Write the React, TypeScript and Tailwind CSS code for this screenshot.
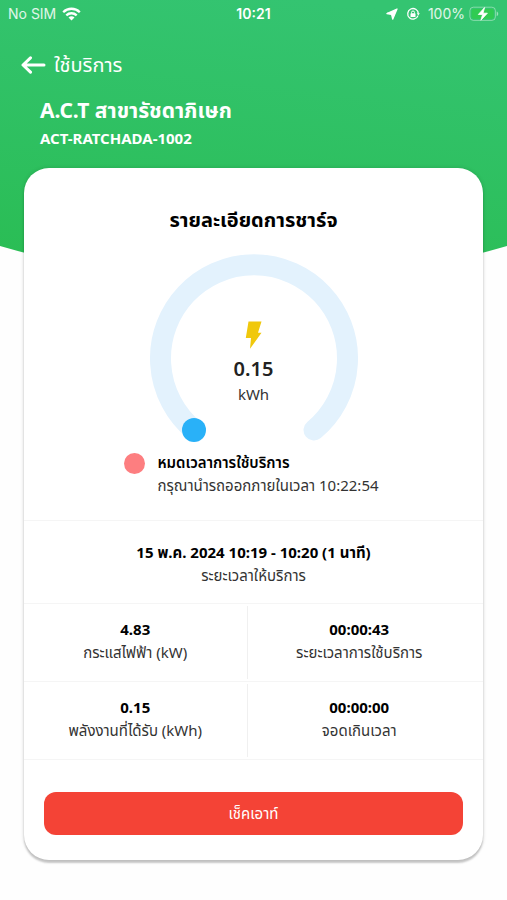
import type { ReactNode } from "react";

type StatProps = {
  value: string;
  label: string;
  className?: string;
};

const stats = [
  [
    { value: "4.83", label: "กระแสไฟฟ้า (kW)" },
    { value: "00:00:43", label: "ระยะเวลาการใช้บริการ" },
  ],
  [
    { value: "0.15", label: "พลังงานที่ได้รับ (kWh)" },
    { value: "00:00:00", label: "จอดเกินเวลา" },
  ],
];

const WifiIcon = () => (
  <svg width="19" height="14" viewBox="0 0 19 14" aria-hidden="true">
    <g fill="none" stroke="white" strokeWidth="2.3">
      <path d="M1.2 5.2C5.900 .6 13.100 .6 17.800 5.200" />
      <path d="M4.300 8.400C7.300 5.500 11.700 5.500 14.700 8.400" />
    </g>
    <path d="M9.500 13.400 6.500 10.400C8.200 8.900 10.800 8.900 12.500 10.400Z" fill="white" />
  </svg>
);

const LocationIcon = () => (
  <svg width="12" height="12" viewBox="0 0 12 12" aria-hidden="true">
    <path
      d="M11 1 6.700 11.200 5.600 6.400.9 5.500Z"
      fill="white"
      stroke="white"
      strokeWidth="1.300"
      strokeLinejoin="round"
    />
  </svg>
);

const RotationLockIcon = () => (
  <svg width="14" height="14" viewBox="0 0 14 14" aria-hidden="true">
    <g fill="none" stroke="white">
      <path d="M12 8.600A5.300 5.300 0 1 1 12.300 6.600" strokeWidth="1.300" />
      <path d="M5.500 6.500V5.500a1.500 1.500 0 0 1 3 0v1" strokeWidth="1" />
    </g>
    <rect x="4.500" y="6.300" width="5" height="3.700" rx=".6" fill="white" />
    <path d="M10.800 6.300h3l-1.500 2.200Z" fill="white" />
  </svg>
);

const BatteryIcon = () => (
  <svg width="30" height="16" viewBox="0 0 30 16" aria-hidden="true">
    <rect x=".9" y="1.200" width="25.500" height="13.200" rx="3.500" fill="none" stroke="white" strokeOpacity=".4" />
    <rect x="2.600" y="2.900" width="22.100" height="9.800" rx="2" fill="#30cb52" />
    <path d="M27.700 5.500c2 .7 2 4 0 4.700Z" fill="white" fillOpacity=".5" />
    <path
      d="M15.600 1.500 9.300 8.500h4.300L11.900 14.200 18.400 7.200h-4.400Z"
      fill="white"
      stroke="white"
      strokeWidth=".8"
      strokeLinejoin="round"
    />
  </svg>
);

const BackIcon = () => (
  <svg width="25" height="18" viewBox="0 0 25 18" aria-hidden="true">
    <path
      d="M23 9H2.500M9.500 1.800 2 9l7.500 7.200"
      fill="none"
      stroke="white"
      strokeWidth="3"
      strokeLinecap="round"
      strokeLinejoin="round"
    />
  </svg>
);

const BoltIcon = () => (
  <svg width="18" height="28" viewBox="0 0 18 28" aria-hidden="true">
    <path d="M3.500.5H16.500L13 11.800H16.500L5 27.800 6 17H.8Z" fill="#f0c80c" />
  </svg>
);

const StatusBar = () => (
  <div className="grid h-7 grid-cols-3 items-center px-2 font-['Inter',sans-serif] text-sm text-white">
    <div className="flex items-center gap-1.5 text-white/85">
      <span>No SIM</span>
      <WifiIcon />
    </div>
    <span className="text-center font-semibold">10:21</span>
    <div className="flex items-center justify-end gap-1">
      <LocationIcon />
      <span className="ml-1">
        <RotationLockIcon />
      </span>
      <span className="ml-1 text-white/85">100%</span>
      <BatteryIcon />
    </div>
  </div>
);

/**
 * Three quarter ring with the energy reading in the middle.
 */
const Gauge = ({ children }: { children: ReactNode }) => (
  <div className="grid justify-items-center">
    <svg
      className="col-start-1 row-start-1"
      width="208"
      height="189"
      viewBox="0 0 208 189"
      aria-hidden="true"
    >
      <path
        d="M44 176A93.500 93.500 0 1 1 164 176"
        fill="none"
        stroke="#e3f2fd"
        strokeWidth="21"
        strokeLinecap="round"
      />
      <circle cx="44" cy="176" r="12" fill="#29b1f8" />
    </svg>
    <div className="col-start-1 row-start-1 flex flex-col items-center pt-[67px]">
      {children}
    </div>
  </div>
);

const Stat = ({ value, label, className }: StatProps) => (
  <div className={className}>
    <dt className="font-bold text-black">{value}</dt>
    <dd>{label}</dd>
  </div>
);

const App = () => (
  <div className="relative min-h-screen bg-[#fefefe] font-['Noto_Sans','Noto_Sans_Thai',sans-serif]">
    <svg
      className="absolute inset-x-0 top-0 h-[280px] w-full"
      viewBox="0 0 507 280"
      preserveAspectRatio="none"
      aria-hidden="true"
    >
      <defs>
        <linearGradient id="header" x1=".6" y1="0" x2=".4" y2="1">
          <stop offset="0" stopColor="#34c471" />
          <stop offset="1" stopColor="#2abd54" />
        </linearGradient>
      </defs>
      <path d="M0 0H507V246Q254 320 0 246Z" fill="url(#header)" />
    </svg>

    <div className="relative">
      <StatusBar />

      <header className="px-5 pt-6 text-white">
        <a href="#" className="flex h-[26px] items-center gap-2 pl-px text-xl">
          <BackIcon />
          ใช้บริการ
        </a>
        <div className="mt-[18px] pl-5">
          <h1 className="text-[21px] leading-7 font-bold">
            A.C.T สาขารัชดาภิเษก
          </h1>
          <p className="text-[15px] leading-7 font-bold">ACT-RATCHADA-1002</p>
        </div>
      </header>

      <main className="mx-6 mt-4 rounded-[25px] bg-white pt-9 pb-[25px] text-[15px] leading-[23px] text-[#333] shadow-[0_3px_2px_rgba(0,0,0,0.2),0_0_4px_rgba(0,0,0,0.14)]">
        <h2 className="mb-[18px] text-center text-xl leading-8 font-bold text-black">
          รายละเอียดการชาร์จ
        </h2>

        <Gauge>
          <BoltIcon />
          <strong className="mt-1.5 text-xl leading-7 font-semibold text-[#222]">
            0.15
          </strong>
          <span>kWh</span>
        </Gauge>

        <div className="mt-2 flex justify-center gap-3 pr-1 pb-[23px]">
          <span className="mt-0.5 size-[21px] rounded-full bg-[#fd7e80]" />
          <div>
            <p className="font-semibold text-black">หมดเวลาการใช้บริการ</p>
            <p>กรุณานำรถออกภายในเวลา 10:22:54</p>
          </div>
        </div>

        <dl className="border-b border-[#f5f5f5] text-center">
          <Stat
            className="border-t border-[#f5f5f5] pt-5 pb-4"
            value="15 พ.ค. 2024 10:19 - 10:20 (1 นาที)"
            label="ระยะเวลาให้บริการ"
          />
          {stats.map(([left, right]) => (
            <div
              key={left.label}
              className="grid grid-cols-2 border-t border-[#f5f5f5] py-0.5 pr-3"
            >
              <Stat {...left} className="border-r border-[#f0f0f0] pt-3 pb-[15px]" />
              <Stat {...right} className="pt-3 pb-[15px]" />
            </div>
          ))}
        </dl>

        <div className="px-5 pt-8">
          <button
            type="button"
            className="h-[43px] w-full rounded-xl bg-[#f44336] text-white"
          >
            เช็คเอาท์
          </button>
        </div>
      </main>
    </div>
  </div>
);

export default App;
